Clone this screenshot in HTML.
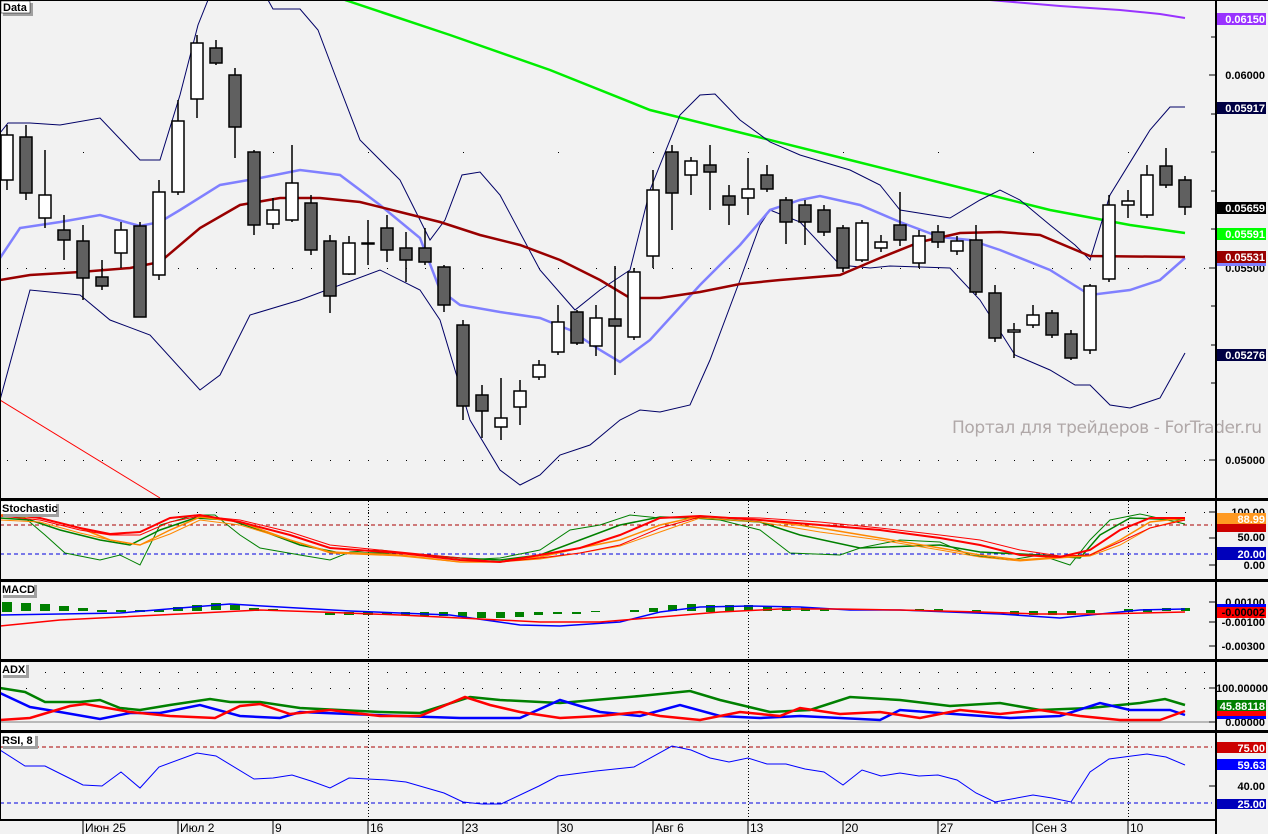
<!DOCTYPE html>
<html><head><meta charset="utf-8"><style>
html,body{margin:0;padding:0;background:#f2f2f2;}
svg{display:block;font-family:"Liberation Sans",sans-serif;}
.ax{font-weight:bold;font-size:11px;fill:#000;}
.lb{font-weight:bold;font-size:11px;fill:#fff;}
.tt{font-weight:bold;font-size:11px;fill:#000;}
.dt{font-size:12px;fill:#000;}
</style></head><body>
<svg width="1268" height="834" viewBox="0 0 1268 834" xmlns="http://www.w3.org/2000/svg">
<defs>
<pattern id="d19" x="7" y="0" width="19" height="4" patternUnits="userSpaceOnUse"><rect x="0" y="0" width="1" height="1" fill="#000"/></pattern>
<pattern id="d95" x="83" y="0" width="95" height="4" patternUnits="userSpaceOnUse"><rect x="0" y="0" width="1" height="1" fill="#000"/></pattern>
<pattern id="vd" x="0" y="0" width="4" height="3" patternUnits="userSpaceOnUse"><rect x="0" y="0" width="1" height="1" fill="#000"/></pattern>
</defs>
<rect width="1268" height="834" fill="#f2f2f2"/>

<!-- main grid dots -->
<g>
<rect x="0" y="75" width="1212" height="1" fill="url(#d19)"/>
<rect x="0" y="268" width="1212" height="1" fill="url(#d19)"/>
<rect x="0" y="460" width="1212" height="1" fill="url(#d19)"/>
<rect x="0" y="37" width="1212" height="1" fill="url(#d95)"/>
<rect x="0" y="114" width="1212" height="1" fill="url(#d95)"/>
<rect x="0" y="152" width="1212" height="1" fill="url(#d95)"/>
<rect x="0" y="191" width="1212" height="1" fill="url(#d95)"/>
<rect x="0" y="229" width="1212" height="1" fill="url(#d95)"/>
<rect x="0" y="306" width="1212" height="1" fill="url(#d95)"/>
<rect x="0" y="345" width="1212" height="1" fill="url(#d95)"/>
<rect x="0" y="383" width="1212" height="1" fill="url(#d95)"/>
<rect x="0" y="422" width="1212" height="1" fill="url(#d95)"/>
</g>

<!-- indicator grid -->
<g>
<rect x="0" y="512" width="1212" height="1" fill="url(#d19)"/>
<rect x="0" y="538" width="1212" height="1" fill="url(#d19)"/>
<rect x="0" y="565" width="1212" height="1" fill="url(#d19)"/>
<rect x="0" y="602" width="1212" height="1" fill="url(#d19)"/>
<rect x="0" y="622" width="1212" height="1" fill="url(#d19)"/>
<rect x="0" y="646" width="1212" height="1" fill="url(#d19)"/>
<rect x="0" y="672" width="1212" height="1" fill="url(#d19)"/>
<rect x="0" y="688" width="1212" height="1" fill="url(#d19)"/>
<rect x="0" y="705" width="1212" height="1" fill="url(#d19)"/>
<rect x="0" y="765" width="1212" height="1" fill="url(#d19)"/>
<rect x="0" y="786" width="1212" height="1" fill="url(#d19)"/>
<g fill="url(#vd)">
<rect x="83" y="500" width="1" height="320"/><rect x="178" y="500" width="1" height="320"/><rect x="273" y="500" width="1" height="320"/><rect x="368" y="500" width="1" height="320"/><rect x="463" y="500" width="1" height="320"/><rect x="558" y="500" width="1" height="320"/><rect x="653" y="500" width="1" height="320"/><rect x="748" y="500" width="1" height="320"/><rect x="843" y="500" width="1" height="320"/><rect x="938" y="500" width="1" height="320"/><rect x="1033" y="500" width="1" height="320"/><rect x="1128" y="500" width="1" height="320"/>
</g>
</g>

<!-- watermark -->
<text x="952" y="433" font-family="DejaVu Sans,sans-serif" font-size="17" fill="#b0a8a8" textLength="310">Портал для трейдеров - ForTrader.ru</text>

<!-- main lines -->
<polyline fill="none" stroke="#ff0000" stroke-width="1" points="0,400 160,498"/>
<polyline fill="none" stroke="#9933ff" stroke-width="2" points="990,0 1060,6 1120,10 1160,14 1185,18"/>
<polyline fill="none" stroke="#00ee00" stroke-width="2.5" points="345,0 450,35 550,70 650,110 750,135 850,160 950,185 1050,210 1130,225 1185,233"/>
<polyline fill="none" stroke="#000066" stroke-width="1" points="0,133 8,123 30,123 60,125 100,118 140,160 160,160 180,95 198,25 208,0 M"/>
<polyline fill="none" stroke="#000066" stroke-width="1" points="268,0 273,9 300,9 318,30 335,75 360,140 400,180 430,240 445,220 462,175 480,172 500,195 540,270 575,310 600,290 630,270 650,190 680,115 700,95 715,94 740,120 770,142 800,155 850,170 880,185 900,210 950,218 980,200 1000,190 1020,200 1050,225 1075,245 1090,260 1110,195 1150,130 1170,107 1185,107"/>
<polyline fill="none" stroke="#000066" stroke-width="1" points="0,400 30,290 80,295 110,320 150,335 200,390 220,375 250,315 300,300 380,270 420,290 440,320 470,420 500,470 520,485 540,475 560,455 590,445 620,420 640,410 660,412 690,405 710,360 740,280 760,225 770,210 800,222 840,265 870,268 890,266 950,268 980,300 1015,355 1050,370 1075,385 1090,385 1110,405 1130,408 1160,398 1185,353"/>
<polyline fill="none" stroke="#8080ff" stroke-width="2.5" points="0,258 20,228 60,222 100,215 140,226 160,222 180,210 220,185 260,178 300,170 340,175 380,205 420,238 440,290 460,305 500,312 540,318 570,330 600,350 620,362 650,340 700,285 740,245 770,210 800,200 820,196 860,205 900,222 940,237 970,240 1000,250 1050,270 1090,295 1130,290 1160,280 1185,258"/>
<polyline fill="none" stroke="#990000" stroke-width="2.5" points="0,280 30,275 80,272 130,268 160,262 200,228 240,205 280,198 320,198 360,202 400,212 440,222 480,235 520,245 560,260 600,280 630,298 660,298 700,292 740,284 780,280 840,275 880,258 920,242 960,233 1000,232 1040,235 1090,256 1185,257"/>

<!-- wicks -->
<path stroke="#000" stroke-width="1.5" fill="none" d="M7 125V190M26 125V200M45 150V228M64 215V260M83 225V300M102 260V290M121 222V268M140 222V317M159 180V280M178 100V195M197 35V118M216 40V65M235 68V158M254 150V235M273 198V229M292 145V222M311 195V255M330 235V313M349 236V275M368 220V265M387 215V262M406 232V282M425 228V265M444 265V312M463 320V420M482 385V438M501 378V440M520 380V425M539 360V380M558 305V355M577 310V345M596 305V356M615 266V375M634 268V340M653 170V268M672 145V230M691 157V195M710 145V210M729 185V225M748 158V215M767 165V192M786 197V244M805 200V245M824 205V236M843 225V272M862 220V262M881 235V252M900 192V246M919 230V268M938 225V248M957 236V255M976 225V295M995 285V342M1014 323V358M1033 305V328M1052 310V338M1071 330V360M1090 284V354M1109 195V282M1128 190V218M1147 165V218M1166 148V188M1185 176V215"/>
<!-- bodies -->
<g stroke="#000" stroke-width="1.5">
<g fill="#fff">
<rect x="1" y="135" width="12" height="45"/><rect x="39" y="195" width="12" height="23"/><rect x="115" y="230" width="12" height="23"/><rect x="153" y="192" width="12" height="83"/><rect x="172" y="121" width="12" height="71"/><rect x="191" y="43" width="12" height="56"/><rect x="267" y="210" width="12" height="14"/><rect x="286" y="183" width="12" height="37"/><rect x="343" y="243" width="12" height="31"/><rect x="362" y="243" width="12" height="1"/><rect x="495" y="418" width="12" height="9"/><rect x="514" y="391" width="12" height="16"/><rect x="533" y="365" width="12" height="12"/><rect x="552" y="322" width="12" height="30"/><rect x="590" y="318" width="12" height="28"/><rect x="628" y="272" width="12" height="65"/><rect x="647" y="190" width="12" height="66"/><rect x="685" y="161" width="12" height="14"/><rect x="742" y="189" width="12" height="9"/><rect x="856" y="223" width="12" height="37"/><rect x="875" y="242" width="12" height="6"/><rect x="913" y="236" width="12" height="27"/><rect x="951" y="241" width="12" height="10"/><rect x="1008" y="330" width="12" height="2"/><rect x="1027" y="315" width="12" height="10"/><rect x="1084" y="286" width="12" height="64"/><rect x="1103" y="205" width="12" height="74"/><rect x="1122" y="201" width="12" height="4"/><rect x="1141" y="175" width="12" height="40"/>
</g>
<g fill="#606060">
<rect x="20" y="137" width="12" height="56"/><rect x="58" y="230" width="12" height="10"/><rect x="77" y="241" width="12" height="37"/><rect x="96" y="277" width="12" height="9"/><rect x="134" y="226" width="12" height="91"/><rect x="210" y="48" width="12" height="15"/><rect x="229" y="75" width="12" height="52"/><rect x="248" y="152" width="12" height="73"/><rect x="305" y="203" width="12" height="47"/><rect x="324" y="241" width="12" height="55"/><rect x="381" y="228" width="12" height="22"/><rect x="400" y="248" width="12" height="12"/><rect x="419" y="248" width="12" height="14"/><rect x="438" y="267" width="12" height="38"/><rect x="457" y="325" width="12" height="81"/><rect x="476" y="395" width="12" height="16"/><rect x="571" y="312" width="12" height="31"/><rect x="609" y="319" width="12" height="7"/><rect x="666" y="152" width="12" height="41"/><rect x="704" y="165" width="12" height="7"/><rect x="723" y="196" width="12" height="9"/><rect x="761" y="175" width="12" height="14"/><rect x="780" y="200" width="12" height="22"/><rect x="799" y="205" width="12" height="17"/><rect x="818" y="210" width="12" height="22"/><rect x="837" y="228" width="12" height="40"/><rect x="894" y="225" width="12" height="15"/><rect x="932" y="232" width="12" height="10"/><rect x="970" y="240" width="12" height="52"/><rect x="989" y="293" width="12" height="45"/><rect x="1046" y="313" width="12" height="22"/><rect x="1065" y="334" width="12" height="24"/><rect x="1160" y="166" width="12" height="19"/><rect x="1179" y="180" width="12" height="27"/>
</g>
</g>

<!-- Stochastic -->
<line x1="0" y1="525" x2="1212" y2="525" stroke="#aa0000" stroke-dasharray="4,3"/>
<line x1="0" y1="554" x2="1212" y2="554" stroke="#0000dd" stroke-dasharray="4,3"/>
<polyline fill="none" stroke="#008000" stroke-width="1" points="0,515 25,518 45,535 65,553 100,560 120,555 140,565 160,525 195,515 215,515 240,535 260,548 300,555 330,560 350,552 380,550 420,555 460,560 500,558 540,550 570,530 600,525 630,515 660,518 690,518 720,520 760,530 790,553 840,555 860,548 900,540 940,542 970,555 1010,560 1040,555 1070,565 1090,540 1110,520 1140,514 1185,524"/>
<polyline fill="none" stroke="#008000" stroke-width="1.5" points="0,518 30,520 60,530 100,540 130,545 160,530 195,518 230,520 260,530 300,545 340,553 400,553 460,558 500,560 540,555 580,540 620,525 660,517 700,518 760,522 800,535 860,548 940,545 980,552 1040,555 1080,558 1100,535 1130,518 1185,520"/>
<polyline fill="none" stroke="#ff8800" stroke-width="1.5" points="0,515 40,518 80,528 110,540 140,545 170,530 200,517 240,522 290,540 330,552 400,555 460,562 500,562 540,557 580,548 620,540 660,525 700,516 760,520 820,528 880,538 940,548 980,555 1020,560 1060,557 1090,555 1120,540 1150,522 1185,518"/>
<polyline fill="none" stroke="#ff8800" stroke-width="1" points="0,520 40,522 80,533 110,540 140,545 170,534 200,520 240,525 290,540 330,553 400,556 460,562 500,562 540,559 580,553 620,546 660,532 700,518 760,522 820,532 880,540 940,550 980,557 1020,561 1060,558 1090,556 1120,545 1150,528 1185,519"/>
<polyline fill="none" stroke="#ff0000" stroke-width="2" points="0,513 40,518 80,528 110,534 140,532 170,518 200,515 240,522 290,535 330,548 400,553 460,560 500,562 540,555 580,548 620,535 660,518 700,516 760,520 820,525 880,530 940,538 980,545 1020,555 1060,557 1090,550 1120,530 1150,518 1185,518"/>
<polyline fill="none" stroke="#ff0000" stroke-width="1" points="0,516 40,520 80,530 110,535 140,535 170,522 200,516 240,520 290,532 330,545 400,552 460,558 500,562 540,558 580,553 620,545 660,528 700,517 760,518 820,522 880,528 940,535 980,540 1020,550 1060,556 1090,555 1120,542 1150,528 1185,520"/>

<!-- MACD -->
<g fill="#008000">
<rect x="2" y="602" width="10" height="10"/><rect x="21" y="603" width="10" height="8"/><rect x="40" y="604" width="10" height="7"/><rect x="59" y="606" width="10" height="5"/><rect x="78" y="608" width="10" height="3"/><rect x="97" y="610" width="10" height="2"/><rect x="116" y="610" width="10" height="2"/><rect x="135" y="610" width="10" height="2"/><rect x="154" y="610" width="10" height="2"/><rect x="173" y="607" width="10" height="4"/><rect x="192" y="605" width="10" height="6"/><rect x="211" y="603" width="10" height="7"/><rect x="230" y="605" width="10" height="5"/><rect x="249" y="608" width="10" height="3"/><rect x="268" y="609" width="10" height="2"/><rect x="325" y="612" width="10" height="3"/><rect x="344" y="612" width="10" height="3"/><rect x="363" y="612" width="10" height="3"/><rect x="382" y="612" width="10" height="3"/><rect x="401" y="612" width="9" height="3"/><rect x="420" y="612" width="9" height="4"/><rect x="439" y="612" width="9" height="4"/><rect x="458" y="612" width="9" height="5"/><rect x="477" y="612" width="9" height="6"/><rect x="496" y="612" width="9" height="6"/><rect x="515" y="612" width="9" height="5"/><rect x="534" y="612" width="9" height="3"/><rect x="553" y="612" width="9" height="2"/><rect x="572" y="612" width="9" height="2"/><rect x="591" y="611" width="9" height="1"/><rect x="630" y="610" width="9" height="2"/><rect x="649" y="608" width="9" height="4"/><rect x="668" y="605" width="9" height="6"/><rect x="687" y="604" width="9" height="7"/><rect x="706" y="605" width="9" height="7"/><rect x="725" y="605" width="9" height="7"/><rect x="744" y="605" width="9" height="6"/><rect x="763" y="606" width="9" height="5"/><rect x="782" y="607" width="9" height="4"/><rect x="801" y="607" width="9" height="4"/><rect x="820" y="608" width="9" height="3"/><rect x="915" y="609" width="9" height="2"/><rect x="934" y="609" width="9" height="2"/><rect x="972" y="610" width="9" height="3"/><rect x="1010" y="611" width="9" height="4"/><rect x="1029" y="611" width="9" height="4"/><rect x="1048" y="611" width="9" height="4"/><rect x="1067" y="611" width="9" height="4"/><rect x="1086" y="610" width="9" height="3"/><rect x="1124" y="609" width="9" height="3"/><rect x="1143" y="609" width="9" height="3"/><rect x="1162" y="608" width="9" height="3"/><rect x="1181" y="608" width="9" height="3"/>
</g>
<polyline fill="none" stroke="#0000ff" stroke-width="1.5" points="0,615 60,614 120,613 180,608 230,604 280,607 350,611 450,615 520,625 560,626 620,622 660,612 700,607 750,606 800,607 850,610 900,610 1000,614 1060,618 1100,614 1140,610 1185,609"/>
<polyline fill="none" stroke="#ff0000" stroke-width="1.5" points="0,626 60,620 120,617 200,613 260,610 320,612 400,615 480,619 540,622 600,622 660,617 720,612 780,609 840,609 900,610 980,612 1040,614 1100,614 1185,612"/>

<!-- ADX -->
<line x1="0" y1="722" x2="1212" y2="722" stroke="#808080" stroke-width="1"/>
<polyline fill="none" stroke="#008000" stroke-width="2.5" points="0,688 25,692 45,702 80,702 100,700 120,708 140,710 170,705 210,699 230,702 260,702 300,708 340,710 380,712 420,713 470,697 500,700 560,703 640,696 690,691 720,700 770,712 810,710 850,697 900,700 950,706 1000,703 1040,710 1090,708 1140,703 1165,699 1185,705"/>
<polyline fill="none" stroke="#0000ff" stroke-width="2.5" points="0,693 30,707 60,712 100,719 130,713 160,713 200,705 240,716 280,718 300,712 400,716 460,718 520,718 560,700 600,712 640,716 680,705 720,716 760,718 800,716 840,718 880,720 900,710 940,713 1010,718 1060,716 1100,703 1130,710 1170,710 1185,715"/>
<polyline fill="none" stroke="#ff0000" stroke-width="2.5" points="0,720 30,718 70,706 85,704 130,712 170,716 215,718 240,706 260,704 290,714 330,710 380,716 420,716 465,697 490,705 520,712 560,718 600,716 620,714 640,712 660,716 700,720 740,712 780,716 800,708 840,714 880,712 920,718 960,710 1000,714 1040,710 1080,716 1120,720 1160,720 1185,711"/>

<!-- RSI -->
<line x1="0" y1="747" x2="1212" y2="747" stroke="#aa0000" stroke-dasharray="4,3"/>
<line x1="0" y1="803" x2="1212" y2="803" stroke="#0000dd" stroke-dasharray="4,3"/>
<polyline fill="none" stroke="#0000ff" stroke-width="1" points="0,750 25,766 45,766 65,776 83,785 102,786 121,772 140,788 159,767 197,753 216,756 254,779 273,778 292,775 311,781 330,788 349,778 387,780 406,782 444,793 463,802 482,804 501,804 539,786 558,776 596,771 634,767 672,746 691,750 710,758 729,762 748,758 767,764 786,764 805,769 824,772 843,785 862,770 881,776 900,773 919,776 938,775 957,780 976,793 995,802 1033,795 1052,798 1071,802 1090,772 1109,759 1147,754 1166,757 1185,765"/>

<!-- panel frames -->
<g fill="#000">
<rect x="0" y="0" width="1268" height="1"/>
<rect x="0" y="0" width="1" height="820"/>
<rect x="0" y="498" width="1268" height="3"/>
<rect x="0" y="579" width="1268" height="3"/>
<rect x="0" y="659" width="1268" height="3"/>
<rect x="0" y="730" width="1268" height="3"/>
<rect x="0" y="819" width="1216" height="2"/>
<rect x="1215" y="0" width="2" height="834"/>
</g>
<!-- axis ticks -->
<path stroke="#000" stroke-width="1" d="M1209 75H1215M1211 114H1215M1211 152H1215M1211 191H1215M1211 229H1215M1209 268H1215M1211 306H1215M1211 345H1215M1211 383H1215M1209 460H1215M1211 37H1215M1209 512H1215M1209 538H1215M1209 565H1215M1209 602H1215M1209 622H1215M1209 646H1215M1209 688H1215M1209 722H1215M1209 786H1215"/>

<!-- titles -->
<g>
<rect x="3" y="3" width="30" height="13" fill="#a0a0a0"/><rect x="1" y="1" width="29" height="12" fill="#fff" stroke="#000" stroke-width="0.5"/><text x="3" y="11" class="tt">Data</text>
<rect x="3" y="504" width="56" height="13" fill="#a0a0a0"/><rect x="1" y="502" width="55" height="12" fill="#fff"/><text x="2" y="512" class="tt">Stochastic</text>
<rect x="3" y="585" width="34" height="13" fill="#a0a0a0"/><rect x="1" y="583" width="33" height="12" fill="#fff"/><text x="2" y="593" class="tt">MACD</text>
<rect x="3" y="665" width="26" height="13" fill="#a0a0a0"/><rect x="1" y="663" width="25" height="12" fill="#fff"/><text x="2" y="673" class="tt">ADX</text>
<rect x="3" y="736" width="35" height="13" fill="#a0a0a0"/><rect x="1" y="734" width="34" height="12" fill="#fff"/><text x="2" y="744" class="tt">RSI, 8</text>
</g>

<!-- right axis labels -->
<g text-anchor="end">
<text x="1265" y="79" class="ax">0.06000</text>
<text x="1265" y="272" class="ax">0.05500</text>
<text x="1265" y="464" class="ax">0.05000</text>
<rect x="1217" y="13" width="49" height="12" fill="#9933ff"/><text x="1265" y="23" class="lb">0.06150</text>
<rect x="1217" y="102" width="49" height="12" fill="#000044"/><text x="1265" y="112" class="lb">0.05917</text>
<rect x="1217" y="202" width="49" height="12" fill="#000"/><text x="1265" y="212" class="lb">0.05659</text>
<rect x="1217" y="228" width="49" height="12" fill="#00ff00"/><text x="1265" y="238" class="lb">0.05591</text>
<rect x="1217" y="262" width="49" height="4" fill="#8080ff"/>
<rect x="1217" y="251" width="49" height="12" fill="#990000"/><text x="1265" y="261" class="lb">0.05531</text>
<rect x="1217" y="349" width="49" height="12" fill="#000044"/><text x="1265" y="359" class="lb">0.05276</text>

<text x="1265" y="516" class="ax">100.00</text>
<text x="1265" y="541" class="ax">50.00</text>
<text x="1265" y="569" class="ax">0.00</text>
<rect x="1217" y="523" width="49" height="9" fill="#cc0000"/>
<rect x="1217" y="513" width="49" height="11" fill="#ff9922"/><text x="1265" y="523" class="lb">88.99</text>
<rect x="1217" y="547" width="49" height="13" fill="#0000bb"/><text x="1265" y="558" class="lb">20.00</text>

<text x="1265" y="606" class="ax">0.00100</text>
<text x="1265" y="626" class="ax">-0.00100</text>
<text x="1265" y="650" class="ax">-0.00300</text>
<rect x="1217" y="604" width="49" height="3" fill="#0000ff"/>
<rect x="1217" y="607" width="49" height="11" fill="#ff0000"/><text x="1265" y="616" class="ax">-0.00002</text>

<text x="1268" y="692" class="ax">100.00000</text>
<text x="1265" y="726" class="ax">0.00000</text>
<rect x="1217" y="716" width="49" height="3" fill="#0000ff"/>
<rect x="1217" y="710" width="49" height="6" fill="#ff0000"/>
<rect x="1217" y="700" width="49" height="11" fill="#008000"/><text x="1265" y="710" class="lb">45.88118</text>

<text x="1265" y="790" class="ax">40.00</text>
<rect x="1217" y="742" width="49" height="11" fill="#cc0000"/><text x="1265" y="752" class="lb">75.00</text>
<rect x="1217" y="759" width="49" height="11" fill="#0000ff"/><text x="1265" y="769" class="lb">59.63</text>
<rect x="1217" y="799" width="49" height="10" fill="#0000bb"/><text x="1265" y="808" class="lb">25.00</text>
</g>

<!-- date axis -->
<path stroke="#000" stroke-width="1" d="M83 821V834M178 821V834M273 821V834M368 821V834M463 821V834M558 821V834M653 821V834M748 821V834M843 821V834M938 821V834M1033 821V834M1128 821V834"/>
<g class="dt">
<text x="85" y="832" class="dt">Июн 25</text>
<text x="180" y="832" class="dt">Июл 2</text>
<text x="275" y="832" class="dt">9</text>
<text x="370" y="832" class="dt">16</text>
<text x="465" y="832" class="dt">23</text>
<text x="560" y="832" class="dt">30</text>
<text x="655" y="832" class="dt">Авг 6</text>
<text x="750" y="832" class="dt">13</text>
<text x="845" y="832" class="dt">20</text>
<text x="940" y="832" class="dt">27</text>
<text x="1035" y="832" class="dt">Сен 3</text>
<text x="1130" y="832" class="dt">10</text>
</g>
</svg>
</body></html>
